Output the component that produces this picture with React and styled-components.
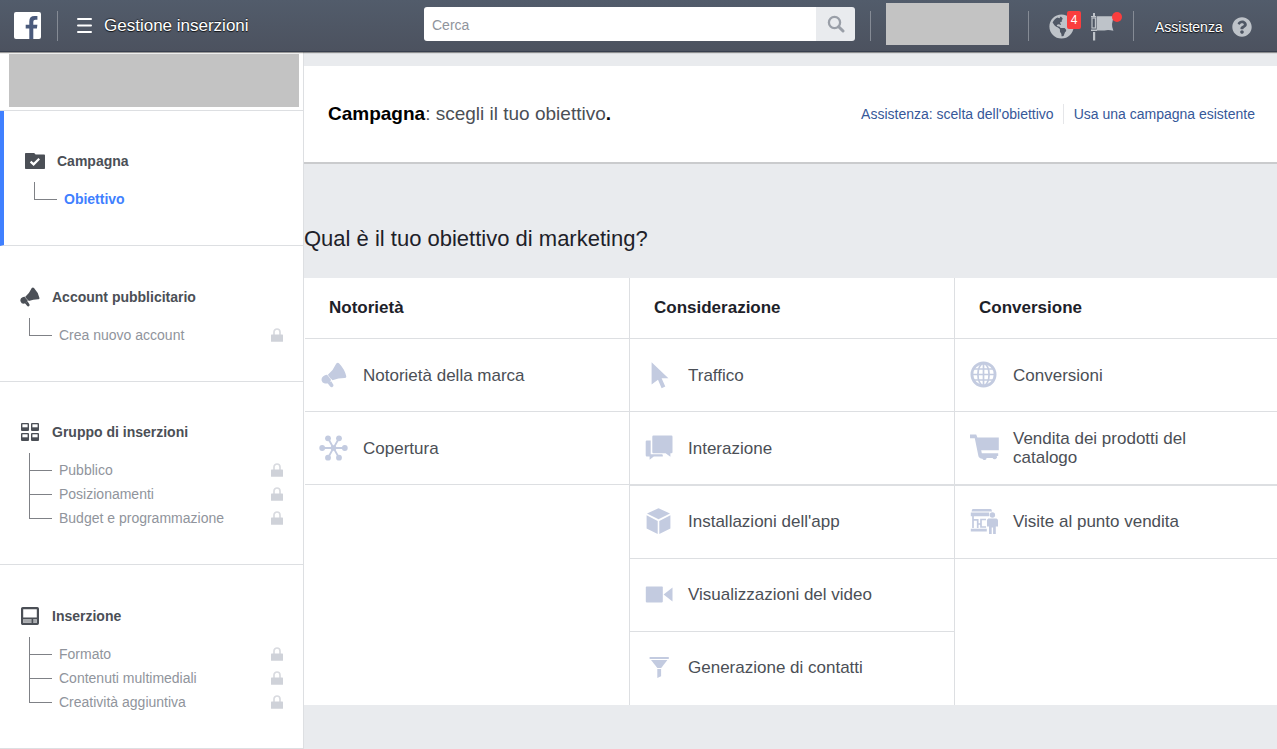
import React from "react";
import styled, { createGlobalStyle, css } from "styled-components";
import { FaGlobeAmericas, FaQuestionCircle } from "react-icons/fa";

const line = "#dddfe2";
const tint = "#c3cbe0";

const GlobalStyle = createGlobalStyle`
  *, *::before, *::after { box-sizing: border-box; }
  body {
    margin: 0;
    background: #e9ebee;
    color: #4b4f56;
    font-family: "Liberation Sans", Arial, sans-serif;
    font-size: 14px;
  }
  a { text-decoration: none; }
  button, input { font: inherit; }
  h1, h2, h3, ul { margin: 0; padding: 0; }
  ul { list-style: none; }
  svg { display: block; flex: none; }
`;

/* ---------- top bar ---------- */

const TopBar = styled.header`
  position: relative;
  display: flex;
  align-items: center;
  height: 52px;
  padding: 0 25px 0 14px;
  background: linear-gradient(#525c6b, #4c525f);
  border-bottom: 1px solid #373e4d;
  box-shadow: 0 1px 1px rgba(0, 0, 0, 0.4);
  color: #fff;
  text-shadow: 0 1px 1px rgba(0, 0, 0, 0.8), 0 -1px 1px rgba(0, 0, 0, 0.5);
`;

const Brand = styled.div`
  display: flex;
  align-items: center;
  flex: 0 0 410px;
`;

const Divider = styled.span`
  flex: none;
  width: 1px;
  height: 30px;
  background: #858b95;
`;

const LogoLink = styled.a`
  margin-right: 16px;
`;

const MenuButton = styled.button`
  display: flex;
  align-items: center;
  gap: 12px;
  margin-left: 19px;
  padding: 0;
  border: 0;
  background: none;
  color: inherit;
  font-size: 17px;
  line-height: 24px;
  text-shadow: inherit;
  cursor: pointer;
`;

const Search = styled.form`
  display: flex;
  flex: 1;
  min-width: 120px;
  height: 34px;
  margin-bottom: 3px;
  border-radius: 3px;
  overflow: hidden;
`;

const SearchInput = styled.input`
  flex: 1;
  min-width: 0;
  padding: 2px 8px 0;
  border: 0;
  outline: 0;
  background: #fff;
  color: #1d2129;
  &::placeholder { color: #90949c; opacity: 1; }
`;

const SearchButton = styled.button`
  display: flex;
  align-items: center;
  justify-content: center;
  width: 39px;
  padding: 0;
  border: 0;
  background: #e9ebee;
  cursor: pointer;
`;

const Tools = styled.div`
  display: flex;
  align-items: center;
  flex: none;
  margin-left: 15px;
`;

const ProfileBlock = styled.div`
  width: 123px;
  height: 42px;
  margin: 0 19px 3px 15px;
  background: #c3c3c3;
`;

const IconButton = styled.button`
  position: relative;
  display: flex;
  width: 26px;
  height: 28px;
  margin-right: 16px;
  padding: 0;
  border: 0;
  background: none;
  color: #bec3c9;
  align-items: center;
  cursor: pointer;
`;

const Alerts = styled.div`
  display: flex;
  margin: 2px 0 0 20px;
`;

const Count = styled.span`
  position: absolute;
  top: -2px;
  right: -6px;
  width: 14px;
  height: 18px;
  border-radius: 2px;
  background: #fa3e3e;
  color: #fff;
  font-size: 12px;
  line-height: 18px;
  text-align: center;
  text-shadow: none;
`;

const Dot = styled.span`
  position: absolute;
  top: -1px;
  right: -5px;
  width: 10px;
  height: 10px;
  border-radius: 50%;
  background: #fa3e3e;
`;

const HelpLink = styled.a`
  display: flex;
  align-items: center;
  justify-content: space-between;
  width: 97px;
  margin-left: 21px;
  padding-top: 2px;
  color: inherit;
  svg { color: #bec3c9; }
`;

/* ---------- sidebar ---------- */

const Layout = styled.div`
  display: flex;
  align-items: stretch;
`;

const Sidebar = styled.nav`
  flex: 0 0 304px;
  background: #fff;
  border-right: 1px solid ${line};
`;

const AccountPanel = styled.div`
  padding: 2px 4px 3px 9px;
  border-bottom: 1px solid ${line};
`;

const AccountBlock = styled.div`
  height: 53px;
  background: #c3c3c3;
`;

const Step = styled.section`
  padding: 38px 20px 34px;
  border-bottom: 1px solid ${line};
  &:nth-of-type(even) { padding-top: 39px; }
  ${(p) =>
    p.$active &&
    css`
      padding-left: 21px;
      border-left: 4px solid #4080ff;
    `}
`;

const StepTitle = styled.h3`
  display: flex;
  align-items: center;
  gap: 12px;
  font-size: 14px;
  line-height: 24px;
`;

const Branches = styled.ul`
  margin: 9px 0 0 9px;
  padding-top: 5px;
`;

const Connector = styled.span`
  display: flex;
  flex-direction: column;
  flex: none;
  width: 23px;
  margin-right: 7px;
  &::before {
    content: "";
    flex: 1;
    border-left: 1px solid #7f8186;
    border-bottom: 1px solid #7f8186;
  }
  &::after {
    content: "";
    height: 11px;
    border-left: 1px solid #7f8186;
  }
`;

const Branch = styled.li`
  display: flex;
  height: 24px;
  line-height: 24px;
  &:first-child ${Connector} { margin-top: -5px; }
  &:last-child ${Connector}::after { border-left-color: transparent; }
  svg { margin: 5px 0 0 auto; }
`;

const BranchLink = styled.a`
  color: ${(p) => (p.$active ? "#4080ff" : "#90949c")};
  font-weight: ${(p) => (p.$active ? 700 : 400)};
`;

/* ---------- main area ---------- */

const Main = styled.main`
  flex: 1;
  min-width: 0;
  padding-top: 14px;
`;

const Intro = styled.div`
  display: flex;
  align-items: center;
  justify-content: space-between;
  min-height: 96px;
  padding: 0 22px 0 24px;
  background: #fff;
  box-shadow: 0 2px 0 #cacbcd;
`;

const IntroTitle = styled.h1`
  color: #000;
  font-size: 19px;
  line-height: 24px;
  span { color: #4b4f56; font-weight: 400; }
`;

const IntroLinks = styled.div`
  display: flex;
  a {
    color: #365899;
    line-height: 20px;
  }
  a + a {
    margin-left: 9px;
    padding-left: 10px;
    border-left: 1px solid #e5e6e9;
  }
`;

const Question = styled.h2`
  margin: 64px 0 26px;
  color: #1d2129;
  font-size: 22px;
  font-weight: 400;
  line-height: 26px;
`;

const Objectives = styled.div`
  display: grid;
  grid-template-columns: 325fr 325fr 323fr;
  background: #fff;
`;

const Column = styled.section`
  min-width: 0;
  border-left: 1px solid ${line};
  &:first-child { border-left-color: #fff; }
`;

const ColumnTitle = styled.h3`
  padding: 18px 24px;
  border-bottom: 1px solid ${line};
  color: #1d2129;
  font-size: 17px;
  line-height: 24px;
`;

const Option = styled.button`
  display: flex;
  align-items: center;
  gap: 14px;
  width: 100%;
  min-height: 73px;
  padding: 0 14px;
  border: 0 solid ${line};
  border-bottom-width: 1px;
  background: none;
  color: #4b4f56;
  font-size: 17px;
  line-height: 19px;
  text-align: left;
  cursor: pointer;
  li:nth-child(n + 3) > & { padding-bottom: 2px; }
  li:nth-child(3) > & {
    min-height: 74px;
    border-top-width: 1px;
  }
  li:nth-child(5) > & { border-bottom-color: #fff; }
  span { max-width: 200px; }
`;

/* ---------- drawings ---------- */

const Logo = () => (
  <svg width="27" height="27" viewBox="0 0 27 27">
    <rect width="27" height="27" rx="2" fill="#fff" />
    <path
      fill="#4a5a7c"
      d="M15.3 27V16.4h-3.6v-3.7h3.6V9.4Q15.3 4 20.6 4h2.8v3.7h-2.1q-2 0-2 2v3h4.1l-.5 3.7h-3.6V27z"
    />
  </svg>
);

const Bars = () => (
  <svg width="15" height="15" viewBox="0 0 15 15" fill="#fff">
    <rect width="15" height="2" rx="1" />
    <rect y="6.5" width="15" height="2" rx="1" />
    <rect y="13" width="15" height="2" rx="1" />
  </svg>
);

const Magnifier = () => (
  <svg width="18" height="18" viewBox="0 0 18 18" fill="none" stroke="#9a9fa8">
    <circle cx="7.5" cy="7.5" r="5.6" strokeWidth="2.3" />
    <path d="M11.7 11.7l4.3 4.3" strokeWidth="3" strokeLinecap="round" />
  </svg>
);

const Flag = () => (
  <svg width="26" height="28" viewBox="0 0 26 28" fill="#bec3c9">
    <path d="M2 0h2v3H2zM2 19h2.2v8.5H2zM5.6 3.2h18q-4.4 7.4-1.2 14.6-5-1.6-9-.4H5.6z" />
    <rect x="1" y="5" width="3.4" height="10" fill="none" stroke="#bec3c9" strokeWidth="1.2" />
    <path d="M0 16.6h6v1.5H0zM0 3h5v1.3H0z" />
  </svg>
);

const Lock = () => (
  <svg width="12" height="14" viewBox="0 0 12 14">
    <path d="M3 7V4a3 3 0 0 1 6 0v3" fill="none" stroke="#d9dbe0" strokeWidth="1.7" />
    <rect y="6.6" width="12" height="7.2" rx=".6" fill="#cfd2d9" />
  </svg>
);

const Horn = ({ size, color }) => (
  <svg width={size} height={size} viewBox="0 0 26 26" fill={color}>
    <path d="M15.3 1.4Q16.8 0 18.2 1.4 23.6 7 25.3 14.2q.1 1.6-1.3 1.7-6.4-.1-12.6 2.4L6.9 12.8q5.4-4.6 8.4-11.4z" />
    <ellipse cx="5.4" cy="17.2" rx="4.9" ry="4.3" transform="rotate(-20 5.4 17.2)" />
    <path d="M6.2 20.7l4-1.4 2.2 3.4q.5 1.5-.9 2.3-1.4.6-2.3-.6z" />
    <path d="M6.6 13l4.2 5.4" stroke="#fff" strokeWidth=".6" />
  </svg>
);

const FolderCheck = () => (
  <svg width="20" height="16" viewBox="0 0 20 16">
    <path fill="#4b4f56" d="M.8 0h8.4l1.4 1.6h8.6q.8 0 .8.8v12.8q0 .8-.8.8H.8Q0 16 0 15.2V.8Q0 0 .8 0z" />
    <path d="M5.6 8.6l3 2.8 5.6-5.6" fill="none" stroke="#fff" strokeWidth="2.2" />
  </svg>
);

const FourTiles = () => (
  <svg width="20" height="18" viewBox="0 0 20 18">
    {[[1, 0], [11, 0], [1, 10], [11, 10]].map(([x, y]) => (
      <g key={`${x}-${y}`}>
        <rect x={x} y={y} width="8" height="8" rx="1" fill="#4b4f56" />
        <rect x={x + 1.4} y={y + 1.3} width="5.2" height="3" fill="#fff" />
      </g>
    ))}
  </svg>
);

const AdTile = () => (
  <svg width="20" height="18" viewBox="0 0 20 18">
    <rect x="2.1" y="1.1" width="15.8" height="15.8" rx=".6" fill="none" stroke="#4b4f56" strokeWidth="2.2" />
    <path d="M3.2 12.4h13.6v3.4H3.2z" fill="#a7a9ad" />
    <path d="M3 11.4h14M12.4 12v4" stroke="#4b4f56" strokeWidth="1.6" />
  </svg>
);

const Figure = ({ children }) => (
  <svg width="30" height="30" viewBox="0 0 30 30" fill={tint}>
    {children}
  </svg>
);

const HornFigure = () => (
  <Figure>
    <svg x="2" y="2" width="26" height="26" viewBox="0 0 26 26"><Horn size={26} color={tint} /></svg>
  </Figure>
);

const Network = () => (
  <Figure>
    <path d="M3 15h23M9 5.3L20 24.7M20 5.3L9 24.7" stroke={tint} strokeWidth="1.8" />
    <circle cx="14.5" cy="15" r="2.8" />
    {[[3.2, 15], [25.8, 15], [9, 5.3], [20, 5.3], [9, 24.7], [20, 24.7]].map(([x, y]) => (
      <circle key={`${x}-${y}`} cx={x} cy={y} r="2.9" />
    ))}
  </Figure>
);

const Pointer = () => (
  <Figure>
    <path d="M7.6 2.3L24.4 18.2h-6.8l3.7 8.4-3.7 1.6-3.6-8.4L7.6 24.4z" />
  </Figure>
);

const Chat = () => (
  <Figure>
    <path d="M2.9 7.4h3.8v13.9h11.5l.6.8v1.3H9.8l-4.2 3.4v-3.4H2.9q-1.2 0-1.2-1.2V8.6q0-1.2 1.2-1.2z" />
    <path d="M9.4 2.6h18q1.1 0 1.1 1.1V19q0 1.2-1.1 1.2h-1v3.6l-4.8-3.6H9.4q-1.1 0-1.1-1.2V3.7q0-1.1 1.1-1.1z" />
  </Figure>
);

const Cube = () => (
  <Figure>
    <path d="M14.5 2.2L26 7.4l-11.5 5.8L3 7.4zM2.6 9.3L13.7 15v13L2.6 22.6zM26.4 9.3L15.3 15v13l11.1-5.4z" />
  </Figure>
);

const Camera = () => (
  <Figure>
    <rect x="1.8" y="7.6" width="17" height="15.8" rx=".8" />
    <path d="M19.6 15.5L28.5 8.6v13.8z" />
  </Figure>
);

const Funnel = () => (
  <Figure>
    <path d="M5.6 5h19.2v2H5.6z" />
    <path d="M7 8h16.4l-6.2 8h-3.8z" />
    <path d="M13.3 17h3.8v7.2L13.3 26z" />
  </Figure>
);

const Globe = () => (
  <Figure>
    <circle cx="14.5" cy="14.5" r="11.6" fill="none" stroke={tint} strokeWidth="2.8" />
    <g fill="none" stroke={tint} strokeWidth="1.7">
      <ellipse cx="14.5" cy="14.5" rx="5.6" ry="11" />
      <path d="M14.5 3v23M4 14.5h21M5.3 9h18.4M5.3 20h18.4" />
    </g>
  </Figure>
);

const Cart = () => (
  <Figure>
    <path d="M1 1.6h6.2l1.2 3h21.4v12.6H12.2l.6 3.1h16.4v2.6h-1.4a2.2 2.2 0 0 1-4.2 2h-6a2.2 2.2 0 0 1-4.2.8Q9.8 25.4 9.4 23L5.8 5.2H1z" />
  </Figure>
);

const Store = () => (
  <Figure>
    <path d="M4 3h17.6q.8 0 1 .8l.4 1.8H2.6L3 3.8Q3.2 3 4 3zM1.8 6.6h18.4v3.6H1.8zM1.8 22.8h16v2.8h-16z" />
    <path
      d="M4 10v12M8.7 22v-8.2h-4M8.7 18H12v-4.5h5M12 18v3h5"
      fill="none"
      stroke={tint}
      strokeWidth="1.7"
    />
    <circle cx="23.4" cy="9" r="2.7" />
    <path d="M19.4 12.6h8q1.6.3 1.6 2v6h-2.2V28h-2.7v-6.5h-1.4V28H20v-7.4h-2v-6q0-1.7 1.4-2z" />
  </Figure>
);

/* ---------- content ---------- */

const steps = [
  { title: "Campagna", icon: <FolderCheck />, active: true, items: ["Obiettivo"] },
  { title: "Account pubblicitario", icon: <Horn size={20} color="#4b4f56" />, items: ["Crea nuovo account"] },
  { title: "Gruppo di inserzioni", icon: <FourTiles />, items: ["Pubblico", "Posizionamenti", "Budget e programmazione"] },
  { title: "Inserzione", icon: <AdTile />, items: ["Formato", "Contenuti multimediali", "Creatività aggiuntiva"] },
];

const columns = [
  {
    title: "Notorietà",
    options: [["Notorietà della marca", HornFigure], ["Copertura", Network]],
  },
  {
    title: "Considerazione",
    options: [
      ["Traffico", Pointer],
      ["Interazione", Chat],
      ["Installazioni dell'app", Cube],
      ["Visualizzazioni del video", Camera],
      ["Generazione di contatti", Funnel],
    ],
  },
  {
    title: "Conversione",
    options: [
      ["Conversioni", Globe],
      ["Vendita dei prodotti del catalogo", Cart],
      ["Visite al punto vendita", Store],
    ],
  },
];

export default function App() {
  return (
    <>
      <GlobalStyle />
      <TopBar>
        <Brand>
          <LogoLink href="#home" aria-label="Facebook"><Logo /></LogoLink>
          <Divider />
          <MenuButton type="button">
            <Bars />
            Gestione inserzioni
          </MenuButton>
        </Brand>
        <Search role="search" onSubmit={(e) => e.preventDefault()}>
          <SearchInput type="text" placeholder="Cerca" aria-label="Cerca" />
          <SearchButton type="submit" aria-label="Avvia ricerca"><Magnifier /></SearchButton>
        </Search>
        <Tools>
          <Divider />
          <ProfileBlock />
          <Divider />
          <Alerts>
            <IconButton type="button" aria-label="Notifiche">
              <FaGlobeAmericas size={25} />
              <Count>4</Count>
            </IconButton>
            <IconButton type="button" aria-label="Segnalazioni">
              <Flag />
              <Dot />
            </IconButton>
          </Alerts>
          <Divider />
          <HelpLink href="#assistenza">
            Assistenza
            <FaQuestionCircle size={20} />
          </HelpLink>
        </Tools>
      </TopBar>
      <Layout>
        <Sidebar>
          <AccountPanel><AccountBlock /></AccountPanel>
          {steps.map((step) => (
            <Step key={step.title} $active={step.active}>
              <StepTitle>{step.icon}{step.title}</StepTitle>
              <Branches>
                {step.items.map((item) => (
                  <Branch key={item}>
                    <Connector />
                    <BranchLink href="#step" $active={step.active}>{item}</BranchLink>
                    {!step.active && <Lock />}
                  </Branch>
                ))}
              </Branches>
            </Step>
          ))}
        </Sidebar>
        <Main>
          <Intro>
            <IntroTitle>Campagna<span>: scegli il tuo obiettivo</span>.</IntroTitle>
            <IntroLinks>
              <a href="#guida">Assistenza: scelta dell'obiettivo</a>
              <a href="#esistente">Usa una campagna esistente</a>
            </IntroLinks>
          </Intro>
          <Question>Qual è il tuo obiettivo di marketing?</Question>
          <Objectives>
            {columns.map((column) => (
              <Column key={column.title}>
                <ColumnTitle>{column.title}</ColumnTitle>
                <ul>
                  {column.options.map(([label, Icon]) => (
                    <li key={label}>
                      <Option type="button"><Icon /><span>{label}</span></Option>
                    </li>
                  ))}
                </ul>
              </Column>
            ))}
          </Objectives>
        </Main>
      </Layout>
    </>
  );
}
